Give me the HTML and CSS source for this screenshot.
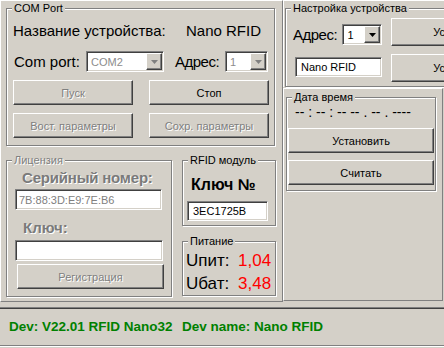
FILE: index.html
```html
<!DOCTYPE html>
<html>
<head>
<meta charset="utf-8">
<link rel="stylesheet" href="styles.css">
</head>
<body>
<div class="top">
  <div class="lpanel">
    <div class="group g-com">
      <div class="cap">COM Port</div>
      <div class="row-name"><span class="name-lbl">Название устройства:</span><span>Nano RFID</span></div>
      <div class="row-port">
        <span class="port-lbl">Com port:</span>
        <div class="combo dis w-port"><span class="val">COM2</span><span class="arrow"><svg width="7" height="4" viewBox="0 0 7 4"><polygon points="0,0 7,0 3.5,4"/></svg></span></div>
        <span class="addr-lbl">Адрес:</span>
        <div class="combo dis w-addr"><span class="val">1</span><span class="arrow"><svg width="7" height="4" viewBox="0 0 7 4"><polygon points="0,0 7,0 3.5,4"/></svg></span></div>
      </div>
      <div class="btn-row">
        <div class="btn dis">Пуск</div>
        <div class="btn">Стоп</div>
      </div>
      <div class="btn-row">
        <div class="btn dis">Вост. параметры</div>
        <div class="btn dis">Сохр. параметры</div>
      </div>
    </div>
    <div class="lower">
      <div class="group g-lic">
        <div class="cap dis">Лицензия</div>
        <div class="lic-lbl serial">Серийный номер:</div>
        <div class="edit e-serial dis-text">7B:88:3D:E9:7E:B6</div>
        <div class="lic-lbl key">Ключ:</div>
        <div class="edit e-key"></div>
        <div class="btn dis b-reg">Регистрация</div>
      </div>
      <div class="rcol">
        <div class="group g-rfid">
          <div class="cap">RFID модуль</div>
          <div class="key-no">Ключ №</div>
          <div class="edit e-rfid">3EC1725B</div>
        </div>
        <div class="group g-pow">
          <div class="cap">Питание</div>
          <div class="pow-row"><span class="pl">Uпит:</span><span class="pv">1,04</span></div>
          <div class="pow-row"><span class="pl">Uбат:</span><span class="pv">3,48</span></div>
        </div>
      </div>
    </div>
  </div>
  <div class="rside">
    <div class="rtop">
      <div class="group g-set">
        <div class="cap">Настройка устройства</div>
        <div class="set-body">
          <div class="set-left">
            <div class="set-addr">
              <span class="set-lbl">Адрес:</span>
              <div class="combo w-set"><span class="val">1</span><span class="arrow"><svg width="7" height="4" viewBox="0 0 7 4"><polygon points="0,0 7,0 3.5,4"/></svg></span></div>
            </div>
            <div class="edit e-name">Nano RFID</div>
          </div>
          <div class="set-right">
            <div class="btn b-set1">Установить</div>
            <div class="btn b-set2">Установить</div>
          </div>
        </div>
      </div>
    </div>
    <div class="rpanel">
      <div class="group g-date">
        <div class="cap">Дата время</div>
        <div class="date-txt">-- : -- : -- -- . -- . ----</div>
        <div class="btn b-date1">Установить</div>
        <div class="btn b-date2">Считать</div>
      </div>
    </div>
  </div>
</div>
<div class="status">
  <span class="st1">Dev: V22.01 RFID Nano32</span>
  <span>Dev name: Nano RFID</span>
</div>
</body>
</html>
```

FILE: styles.css
```css
* { box-sizing: border-box; }
html, body { margin: 0; padding: 0; }
body {
  width: 444px;
  height: 348px;
  overflow: hidden;
  background: #d4d0c8;
  font-family: "Liberation Sans", Arial, sans-serif;
  color: #000;
}

/* generic classic controls */
.group {
  border: 1px solid #808080;
  box-shadow: inset 1px 1px 0 #fff, 1px 1px 0 #fff;
}
.cap {
  width: max-content;
  height: 13px;
  margin: -7px 0 0 5px;
  padding: 0 2px;
  background: #d4d0c8;
  font-size: 11px;
  line-height: 13px;
}
.cap.dis { color: #808080; text-shadow: 1px 1px 0 #fff; }

.btn {
  display: flex;
  align-items: center;
  justify-content: center;
  height: 25px;
  background: #d4d0c8;
  border: 1px solid;
  border-color: #fff #404040 #404040 #fff;
  box-shadow: inset -1px -1px 0 #808080;
  font-size: 11px;
  white-space: nowrap;
}
.btn.dis { color: #808080; text-shadow: 1px 1px 0 #fff; }

.edit {
  display: flex;
  align-items: center;
  height: 21px;
  padding-left: 4px;
  background: #fff;
  border: 1px solid;
  border-color: #808080 #fff #fff #808080;
  box-shadow: inset 1px 1px 0 #404040, inset -1px -1px 0 #d4d0c8;
  font-size: 11px;
  white-space: nowrap;
}
.dis-text { color: #808080; }

.combo {
  display: flex;
  align-items: center;
  height: 21px;
  padding: 1px;
  background: #fff;
  border: 1px solid;
  border-color: #808080 #fff #fff #808080;
  box-shadow: inset 1px 1px 0 #404040, inset -1px -1px 0 #d4d0c8;
  font-size: 11px;
}
.combo .val { flex: 1; padding-left: 3px; }
.combo .arrow {
  display: flex;
  align-items: center;
  justify-content: center;
  width: 16px;
  height: 17px;
  background: #d4d0c8;
  border: 1px solid;
  border-color: #fff #404040 #404040 #fff;
  box-shadow: inset -1px -1px 0 #808080;
}
.combo .arrow svg { fill: #000; }
.combo.dis .val { color: #8c8c8c; }
.combo.dis .arrow svg { fill: #808080; }

/* layout */
.top { display: flex; height: 302px; }
.lpanel {
  flex: none;
  width: 283px;
  height: 302px;
  border: 1px solid;
  border-color: #fff #808080 #808080 #fff;
}

.g-com { margin: 7px 0 0 5px; width: 269px; height: 138px; }
.row-name {
  display: flex;
  height: 19px;
  margin-top: 6px;
  padding-left: 6px;
  font-size: 15px;
  line-height: 19px;
  white-space: nowrap;
}
.name-lbl { width: 173px; }
.row-port {
  display: flex;
  align-items: center;
  height: 21px;
  margin-top: 11px;
  padding-left: 7px;
  font-size: 15px;
  white-space: nowrap;
}
.port-lbl { width: 72px; }
.w-port { width: 78px; }
.addr-lbl { width: 50px; margin-left: 11px; letter-spacing: -0.5px; }
.w-addr { width: 43px; }
.btn-row { display: flex; gap: 16px; margin-top: 8px; padding-left: 6px; }
.btn-row .btn { width: 120px; }

.lower { display: flex; margin-top: 14px; }
.g-lic { flex: none; margin-left: 5px; width: 166px; height: 137px; }
.lic-lbl {
  height: 18px;
  padding-left: 15px;
  font-size: 15px;
  font-weight: bold;
  line-height: 18px;
  color: #7a7a7a;
  text-shadow: 1px 1px 0 #fff;
  white-space: nowrap;
}
.serial { margin-top: 2px; letter-spacing: -0.2px; }
.e-serial { margin: 2px 0 0 8px; width: 147px; padding-left: 3px; }
.key { margin-top: 9px; padding-left: 16px; }
.e-key { margin: 3px 0 0 8px; width: 148px; }
.b-reg { margin: 3px 0 0 10px; width: 147px; }

.rcol { flex: none; margin-left: 10px; width: 95px; }
.g-rfid { width: 94px; height: 66px; }
.key-no {
  height: 19px;
  margin-top: 8px;
  padding-left: 8px;
  font-size: 16px;
  font-weight: bold;
  line-height: 19px;
}
.e-rfid { margin: 7px 0 0 4px; width: 81px; height: 20px; padding-left: 5px; }
.g-pow { margin-top: 15px; width: 94px; height: 55px; }
.pow-row {
  display: flex;
  height: 20px;
  margin-top: 3px;
  padding-left: 3px;
  font-size: 17px;
  line-height: 20px;
}
.pl { width: 52px; }
.pv { color: #ff0000; }

.rside { flex: none; width: 300px; }
.rtop { border-top: 1px solid #fff; border-left: 1px solid #fff; }
.g-set { margin: 7px 0 0 1px; width: 260px; height: 79px; }
.set-body { display: flex; }
.set-left { flex: none; margin-left: 7px; width: 89px; }
.set-addr {
  display: flex;
  align-items: center;
  height: 21px;
  margin-top: 9px;
  font-size: 15px;
}
.set-lbl { width: 50px; letter-spacing: -0.5px; }
.w-set { width: 40px; }
.e-name { margin: 12px 0 0 2px; width: 87px; height: 20px; padding-left: 5px; }
.set-right { flex: none; margin-left: 9px; width: 142px; }
.b-set1 { margin-top: 3px; height: 28px; }
.b-set2 { margin-top: 8px; height: 28px; }

.rpanel {
  margin-top: 1px;
  width: 160px;
  height: 213px;
  border: 1px solid;
  border-color: #fff #808080 #808080 #fff;
}
.g-date { margin: 8px 0 0 2px; width: 150px; height: 94px; }
.date-txt {
  height: 16px;
  padding-left: 8px;
  font-size: 14px;
  line-height: 16px;
  white-space: pre;
}
.b-date1 { margin: 8px 0 0 1px; width: 146px; }
.b-date2 { margin: 7px 0 0 1px; width: 146px; }

.status {
  display: flex;
  height: 39px;
  margin-top: 5px;
  padding: 11px 0 0 9px;
  border-top: 1px solid #808080;
  border-bottom: 1px solid #808080;
  box-shadow: inset 0 1px 0 #404040, 0 1px 0 #fff;
  color: #008000;
  font-size: 13.5px;
  font-weight: bold;
  line-height: 16px;
  white-space: nowrap;
}
.st1 { width: 173px; }
```
